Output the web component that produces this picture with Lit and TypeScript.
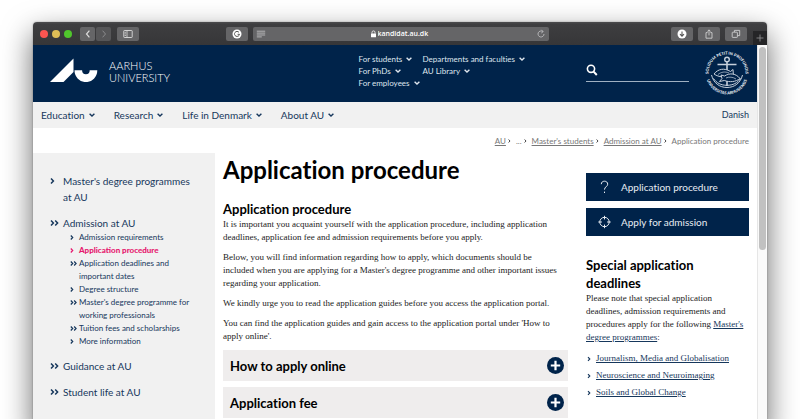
import { LitElement, html, css, svg, nothing } from "lit";
import { customElement, property } from "lit/decorators.js";

type SideItem = { label: string; double?: boolean; current?: boolean; children?: SideItem[] };

const NAV = ["Education", "Research", "Life in Denmark", "About AU"];
const SERVICE = [
  ["For students", "For PhDs", "For employees"],
  ["Departments and faculties", "AU Library"],
];
const SIDE: SideItem[] = [
  { label: "Master's degree programmes at AU" },
  {
    label: "Admission at AU",
    double: true,
    children: [
      { label: "Admission requirements" },
      { label: "Application procedure", current: true },
      { label: "Application deadlines and important dates", double: true },
      { label: "Degree structure" },
      { label: "Master's degree programme for working professionals", double: true },
      { label: "Tuition fees and scholarships", double: true },
      { label: "More information" },
    ],
  },
  { label: "Guidance at AU", double: true },
  { label: "Student life at AU", double: true },
];
const PROGRAMMES = [
  "Journalism, Media and Globalisation",
  "Neuroscience and Neuroimaging",
  "Soils and Global Change",
];

const chevronDown = html`<svg class="down" viewBox="0 0 8 8" aria-hidden="true">
  <path d="M1.6 2.8 4 5.1 6.4 2.8" fill="none" stroke="currentColor" stroke-width="1.4" />
</svg>`;

const chevrons = (double = false) => html`<svg class="chev" viewBox="0 0 10 8" aria-hidden="true">
  <path d="M1 1.5 3.4 4 1 6.5" fill="none" stroke="currentColor" stroke-width="1.5" />
  ${double
    ? svg`<path d="M5.2 1.5 7.6 4 5.2 6.5" fill="none" stroke="currentColor" stroke-width="1.5" />`
    : nothing}
</svg>`;

@customElement("browser-bar")
export class BrowserBar extends LitElement {
  static styles = css`
    :host {
      display: flex;
      align-items: center;
      height: 23px;
      padding-left: 7px;
      background: linear-gradient(#4c4c4e, #3e3e40 10%, #363638);
      border-radius: 4px 4px 0 0;
      overflow: hidden;
      font-family: "Liberation Sans", Arial, sans-serif;
    }
    button {
      display: grid;
      place-items: center;
      flex: none;
      width: 22px;
      height: 14px;
      padding: 0;
      border: 0;
      border-radius: 2px;
      background: #656567;
      color: #dcdcdc;
    }
    .lights {
      display: flex;
      gap: 4px;
      margin-right: 8px;
    }
    .light {
      width: 8px;
      height: 8px;
      border-radius: 50%;
    }
    .red {
      background: #fc5550;
    }
    .yellow {
      background: #dfbe56;
    }
    .green {
      background: #50c62c;
    }
    .group {
      display: flex;
      gap: 1px;
      margin-right: 6px;
    }
    .group button {
      width: 15px;
    }
    .dim {
      background: #565658;
      color: #8b8b8d;
    }
    svg {
      display: block;
      width: 10px;
      height: 10px;
      fill: none;
      stroke: currentColor;
    }
    .space {
      flex: 1 1 86px;
    }
    .space.end {
      flex-grow: 1;
      flex-basis: 122px;
    }
    .address {
      display: flex;
      flex: 0 0 296px;
      align-items: center;
      justify-content: space-between;
      height: 14px;
      margin-left: 5px;
      padding: 0 3px;
      box-sizing: border-box;
      border-radius: 2px;
      background: #656567;
      color: #bdbdbf;
    }
    .url {
      display: flex;
      align-items: center;
      gap: 1px;
    }
    .url svg {
      width: 7px;
      height: 8px;
      color: #fff;
    }
    input {
      width: 54px;
      padding: 0;
      border: 0;
      background: none;
      color: #fff;
      font: 600 7px/12px "Open Sans", sans-serif;
    }
    .tools {
      display: flex;
      gap: 5px;
      margin-right: 6px;
    }
    .new {
      align-self: end;
      width: 14px;
      border-radius: 0;
      background: #252527;
      color: #8b8b8d;
    }
  `;

  render() {
    return html`
      <div class="lights">
        <span class="light red"></span><span class="light yellow"></span><span class="light green"></span>
      </div>
      <div class="group">
        <button aria-label="Back">
          <svg viewBox="0 0 10 10"><path d="M6.4 1.7 3.5 5l2.900 3.300" stroke-width="1.200" /></svg>
        </button>
        <button class="dim" aria-label="Forward">
          <svg viewBox="0 0 10 10"><path d="M3.600 1.700 6.500 5 3.600 8.300" /></svg>
        </button>
      </div>
      <button aria-label="Show sidebar">
        <svg viewBox="0 0 10 10">
          <rect x=".8" y="1.500" width="8.400" height="7" rx=".6" stroke-width=".9" />
          <path d="M4 1.500v7M1.700 3.300h1.200M1.700 4.900h1.200M1.700 6.500h1.200" stroke-width=".8" />
        </svg>
      </button>
      <span class="space"></span>
      <button aria-label="Grammar checker">
        <svg viewBox="0 0 10 10">
          <circle cx="5" cy="5" r="4.500" fill="#fff" stroke="none" />
          <path d="M7 3.400A2.500 2.500 0 1 0 7.500 5.300H5.600" stroke="#555" stroke-width="1" />
        </svg>
      </button>
      <div class="address">
        <svg viewBox="0 0 10 10">
          <path d="M.8 2.200h8.400M.8 4.100h8.400M.8 6h8.400M.8 7.900h5" stroke-width=".9" />
        </svg>
        <div class="url">
          <svg viewBox="0 0 7 8">
            <rect x="1" y="3.500" width="5" height="3.800" rx=".5" fill="currentColor" stroke="none" />
            <path d="M2 3.800V2.400a1.500 1.500 0 0 1 3 0v1.400" stroke-width=".8" />
          </svg>
          <input aria-label="Address" value="kandidat.au.dk" />
        </div>
        <svg viewBox="0 0 10 10">
          <path d="M8 5a3 3 0 1 1-1.200-2.400M5.400.8 7.200 2.600 5.300 4" stroke-width=".9" />
        </svg>
      </div>
      <span class="space end"></span>
      <div class="tools">
        <button aria-label="Downloads">
          <svg viewBox="0 0 10 10">
            <circle cx="5" cy="5" r="4.500" fill="#fff" stroke="none" />
            <path d="M5 2.400v4.600M3 5.200l2 2 2-2" stroke="#555" stroke-width="1.100" />
          </svg>
        </button>
        <button aria-label="Share">
          <svg viewBox="0 0 10 10">
            <path d="M3.600 3.600H2v5.600h6V3.600H6.400M5 6.400V.9M3.400 2.400 5 .9l1.600 1.500" stroke-width=".8" />
          </svg>
        </button>
        <button aria-label="Show tabs">
          <svg viewBox="0 0 10 10">
            <rect x="1.200" y="3.200" width="5.200" height="5.200" rx=".6" stroke-width=".8" />
            <path d="M3.400 3V1.400h5.300v5.200H6.600" stroke-width=".8" />
          </svg>
        </button>
      </div>
      <button class="new" aria-label="New tab">
        <svg viewBox="0 0 10 10"><path d="M5 1.500v7M1.500 5h7" stroke-width=".9" /></svg>
      </button>
    `;
  }
}

@customElement("site-header")
export class SiteHeader extends LitElement {
  static styles = css`
    :host {
      display: block;
      font-family: Lato, "Open Sans", sans-serif;
    }
    .top {
      display: flex;
      height: 57px;
      padding: 0 8px 0 17px;
      background: #00234a;
      color: #fff;
    }
    .brand {
      display: flex;
      align-items: flex-start;
      gap: 11px;
      flex: 1;
      padding-top: 13px;
      color: #fff;
      text-decoration: none;
      font-size: 11px;
      line-height: 12px;
      font-weight: 300;
    }
    .mark {
      width: 48px;
      height: 24px;
    }
    .name {
      padding-top: 2px;
    }
    button {
      display: flex;
      align-items: center;
      gap: 3px;
      padding: 0;
      border: 0;
      background: none;
      color: inherit;
      font: inherit;
      white-space: nowrap;
    }
    .down {
      width: 8px;
      height: 8px;
    }
    .service {
      display: flex;
      gap: 2px;
      padding-top: 8px;
      font-size: 8px;
      line-height: 12px;
      color: #dfe6ee;
    }
    .search {
      display: flex;
      align-items: center;
      box-sizing: border-box;
      width: 103px;
      height: 20px;
      margin: 17px 16px 0 60px;
      border-bottom: 1px solid #9fb0c2;
    }
    .search svg {
      width: 12px;
      height: 12px;
      flex: none;
      margin-bottom: 4px;
    }
    .search input {
      flex: 1;
      min-width: 0;
      border: 0;
      background: none;
      color: #fff;
      font: inherit;
    }
    .seal {
      width: 44px;
      height: 44px;
      margin-top: 6px;
      overflow: visible;
      font: 900 4px Lato, "Open Sans", sans-serif;
    }
    .nav {
      display: flex;
      align-items: center;
      gap: 18px;
      height: 26px;
      padding: 0 8px;
      background: #f1f1f1;
      color: #16375c;
      font-size: 10px;
      line-height: 14px;
    }
    .lang {
      margin-left: auto;
      color: inherit;
      font-size: 9px;
      text-decoration: none;
    }
  `;

  render() {
    return html`
      <header class="top">
        <a class="brand" href="#home">
          <svg class="mark" viewBox="0 0 48 24" fill="#fff" aria-hidden="true">
            <path d="M0 24 23.500 .4V14L13.500 24Z" />
            <path d="M24.500 12.300h7.600a3.800 4 0 0 0 7.600 0h7.600a11.400 11.800 0 0 1-22.800 0Z" />
          </svg>
          <span class="name">AARHUS<br />UNIVERSITY</span>
        </a>
        <div class="service">
          ${SERVICE.map(
            (col) => html`<div>${col.map((t) => html`<button>${t}${chevronDown}</button>`)}</div>`
          )}
        </div>
        <label class="search">
          <svg viewBox="0 0 12 12" fill="none" stroke="#fff" aria-hidden="true">
            <circle cx="5" cy="4.800" r="3.600" stroke-width="1.600" />
            <path d="m7.600 7.600 3.200 3.400" stroke-width="2" />
          </svg>
          <input type="search" aria-label="Search" />
        </label>
        <svg class="seal" viewBox="0 0 44 44" fill="none" stroke="#c6d0dc" role="img" aria-label="University seal">
          <defs>
            <path id="upper" d="M4.600 28.300A18.500 18.500 0 1 1 39.400 28.300" />
            <path id="lower" d="M.9 20.200A21.200 21.200 0 1 0 43.100 20.200" />
          </defs>
          <text fill="#e3e9f0" stroke="none">
            <textPath href="#upper" startOffset="50%" text-anchor="middle">SOLIDUM PETIT IN PROFUNDIS</textPath>
          </text>
          <text fill="#e3e9f0" stroke="none">
            <textPath href="#lower" startOffset="50%" text-anchor="middle">UNIVERSITAS ARHUSIENSIS</textPath>
          </text>
          <circle cx="22" cy="8.500" r="2.300" stroke-width="1.400" />
          <path d="M22 10.800V35M12.500 13.500h19" stroke-width="1.600" />
          <path d="M6.500 24c2 8 8 12.500 15.500 12.500S35.500 32 37.500 24" stroke-width="1" />
          <path d="M8.500 27.500c3 4.500 7.500 6.800 13.500 6.800s10.500-2.300 13.500-6.800" stroke-width="1" />
          <path d="M9 23c4-5 10-6.500 16.500-2.500l2.500-2 .3 4.500 2 2.500-4.300-1C20 26.500 14 26.500 9 23Z" fill="#00234a" />
          <path d="M35 27.500c-4-5-10-6-15.500-2.500l-3.500-1 1 3.500-2.500 3 4.800-1C25 31.500 30.500 31 35 27.500Z" fill="#00234a" />
          <path d="M13 23.500c3-2.500 7-3.300 11-1.500M31 28c-3-2-7-2.500-10-1" stroke-width=".7" />
        </svg>
      </header>
      <nav class="nav" aria-label="Main">
        ${NAV.map((t) => html`<button>${t}${chevronDown}</button>`)}
        <a class="lang" href="#da">Danish</a>
      </nav>
    `;
  }
}

@customElement("side-menu")
export class SideMenu extends LitElement {
  static styles = css`
    :host {
      display: block;
      padding: 20px 16px 20px 17px;
      background: #f1f1f1;
      font: 10px/16px Lato, "Open Sans", sans-serif;
      color: #16375c;
    }
    ul {
      margin: 0;
      padding: 0;
      list-style: none;
    }
    a {
      display: grid;
      grid-template-columns: 13px 1fr;
      color: inherit;
      text-decoration: none;
    }
    .chev {
      width: 10px;
      height: 8px;
      margin-top: 4px;
    }
    .item {
      margin-bottom: 10px;
    }
    .sub {
      padding-left: 20px;
      font-size: 8px;
      line-height: 13px;
    }
    .sub a {
      grid-template-columns: 9px 1fr;
    }
    .sub .chev {
      width: 8px;
      height: 7px;
      margin-top: 3px;
    }
    .current {
      color: #e6186e;
      font-weight: 900;
    }
  `;

  private item(i: SideItem, top: boolean): unknown {
    return html`<li class=${top ? "item" : ""}>
      <a class=${i.current ? "current" : ""} href="#page">${chevrons(i.double)}<span>${i.label}</span></a>
      ${i.children ? html`<ul class="sub">${i.children.map((c) => this.item(c, false))}</ul>` : nothing}
    </li>`;
  }

  render() {
    return html`<nav aria-label="Section"><ul>${SIDE.map((i) => this.item(i, true))}</ul></nav>`;
  }
}

@customElement("accordion-row")
export class AccordionRow extends LitElement {
  @property() label = "";

  static styles = css`
    :host {
      display: block;
      margin-bottom: 6px;
    }
    h3 {
      margin: 0;
    }
    button {
      display: flex;
      align-items: center;
      justify-content: space-between;
      width: 100%;
      height: 31px;
      padding: 0 4px 0 7px;
      border: 0;
      background: #efeded;
      color: #000;
      font: 700 13px Lato, "Open Sans", sans-serif;
      font-variant-ligatures: none;
    }
    svg {
      width: 17px;
      height: 17px;
    }
  `;

  render() {
    return html`<h3>
      <button aria-expanded="false">
        ${this.label}
        <svg viewBox="0 0 17 17" aria-hidden="true">
          <circle cx="8.500" cy="8.500" r="8.500" fill="#00234a" />
          <path d="M8.500 3.800v9.400M3.800 8.500h9.400" stroke="#fff" stroke-width="2.200" />
        </svg>
      </button>
    </h3>`;
  }
}

@customElement("app-root")
export class AppRoot extends LitElement {
  static styles = css`
    :host {
      display: flex;
      box-sizing: border-box;
      height: 100vh;
      padding: 22px 33px 0;
      overflow: hidden;
      background: #fff;
      font: 9px/13px "Liberation Serif", "Times New Roman", serif;
      font-variant-ligatures: none;
      color: #222;
    }
    .window {
      flex: 1;
      min-width: 0;
      min-height: 100%;
      height: max-content;
      display: flex;
      flex-direction: column;
      border-radius: 4px 4px 0 0;
      background: #fff;
      box-shadow: 0 12px 30px rgba(0, 0, 0, 0.6), 0 0 2px rgba(0, 0, 0, 0.35);
    }
    .view {
      flex: 1;
      display: flex;
    }
    .page {
      flex: 1;
      min-width: 0;
      display: flex;
      flex-direction: column;
    }
    .track {
      width: 10px;
      background: #fafafa;
      border-left: 1px solid #e6e6e6;
      box-sizing: border-box;
      padding: 2px 1px;
    }
    .thumb {
      height: 203px;
      border-radius: 4px;
      background: #c1c1c1;
    }
    .crumbs {
      display: flex;
      align-items: center;
      justify-content: flex-end;
      gap: 2px;
      height: 25px;
      padding-right: 8px;
      font: 8px/12px Lato, "Open Sans", sans-serif;
      font-variant-ligatures: none;
      color: #777;
    }
    .crumbs a {
      color: inherit;
    }
    .chev {
      width: 10px;
      height: 8px;
      flex: none;
    }
    .crumbs .chev {
      width: 6px;
      height: 8px;
      color: #333;
    }
    .columns {
      flex: 1;
      display: grid;
      grid-template-columns: 182px minmax(0, 1fr) 171px;
    }
    main {
      padding: 0 18px 0 8px;
    }
    h1,
    h2 {
      margin: 0;
      color: #000;
      font-family: Lato, "Open Sans", sans-serif;
      font-weight: 700;
    }
    h1 {
      font-size: 24px;
      line-height: 34px;
      margin-bottom: 13px;
    }
    h2 {
      font-size: 13px;
      line-height: 18px;
    }
    p {
      margin: 0 0 7px;
    }
    aside {
      padding: 20px 8px 0 0;
    }
    .cta {
      display: flex;
      align-items: center;
      gap: 10px;
      height: 28px;
      margin-bottom: 7px;
      padding-left: 12px;
      background: #00234a;
      color: #e8edf3;
      font: 10px Lato, "Open Sans", sans-serif;
      font-variant-ligatures: none;
      text-decoration: none;
    }
    .cta svg {
      width: 13px;
      height: 14px;
    }
    aside h2 {
      margin-top: 20px;
    }
    aside p {
      margin-bottom: 6px;
    }
    aside p a,
    .links a {
      color: #16375c;
    }
    .links {
      margin: 0;
      padding: 0;
      list-style: none;
    }
    .links li {
      display: flex;
      align-items: center;
      height: 17px;
    }
    .links .chev {
      color: #16375c;
      width: 10px;
      height: 6px;
    }
  `;

  render() {
    return html`
      <div class="window">
        <browser-bar></browser-bar>
        <div class="view">
          <div class="page">
            <site-header></site-header>
            <nav class="crumbs" aria-label="Breadcrumb">
              <a href="#au">AU</a>${chevrons()}<span>...</span>${chevrons()}
              <a href="#students">Master's students</a>${chevrons()}
              <a href="#admission">Admission at AU</a>${chevrons()}
              <span>Application procedure</span>
            </nav>
            <div class="columns">
              <side-menu></side-menu>
              <main>
                <h1>Application procedure</h1>
                <h2>Application procedure</h2>
                <p>
                  It is important you acquaint yourself with the application procedure, including application<br />
                  deadlines, application fee and admission requirements before you apply.
                </p>
                <p>
                  Below, you will find information regarding how to apply, which documents should be<br />
                  included when you are applying for a Master's degree programme and other important issues<br />
                  regarding your application.
                </p>
                <p>We kindly urge you to read the application guides before you access the application portal.</p>
                <p>
                  You can find the application guides and gain access to the application portal under 'How to<br />
                  apply online'.
                </p>
                <accordion-row label="How to apply online"></accordion-row>
                <accordion-row label="Application fee"></accordion-row>
              </main>
              <aside>
                <a class="cta" href="#procedure">
                  <svg viewBox="0 0 13 14" fill="none" stroke="currentColor" aria-hidden="true">
                    <path d="M3.300 4.200C3.300 2.200 4.700 1.200 6.500 1.200s3.200 1.100 3.200 3c0 2.400-3.200 2.600-3.200 5.400M6.500 11.600v1.400" />
                  </svg>
                  Application procedure
                </a>
                <a class="cta" href="#apply">
                  <svg viewBox="0 0 13 14" fill="none" stroke="currentColor" aria-hidden="true">
                    <circle cx="6.500" cy="7" r="4.700" />
                    <path d="M6.500 .8v3.600M6.500 9.600v3.600M.3 7h3.600M9.100 7h3.600" />
                  </svg>
                  Apply for admission
                </a>
                <h2>Special application<br />deadlines</h2>
                <p>
                  Please note that special application<br />
                  deadlines, admission requirements and<br />
                  procedures apply for the following <a href="#masters">Master's<br />degree programmes</a>:
                </p>
                <ul class="links">
                  ${PROGRAMMES.map((t) => html`<li>${chevrons()}<a href="#programme">${t}</a></li>`)}
                </ul>
              </aside>
            </div>
          </div>
          <div class="track"><div class="thumb"></div></div>
        </div>
      </div>
    `;
  }
}
